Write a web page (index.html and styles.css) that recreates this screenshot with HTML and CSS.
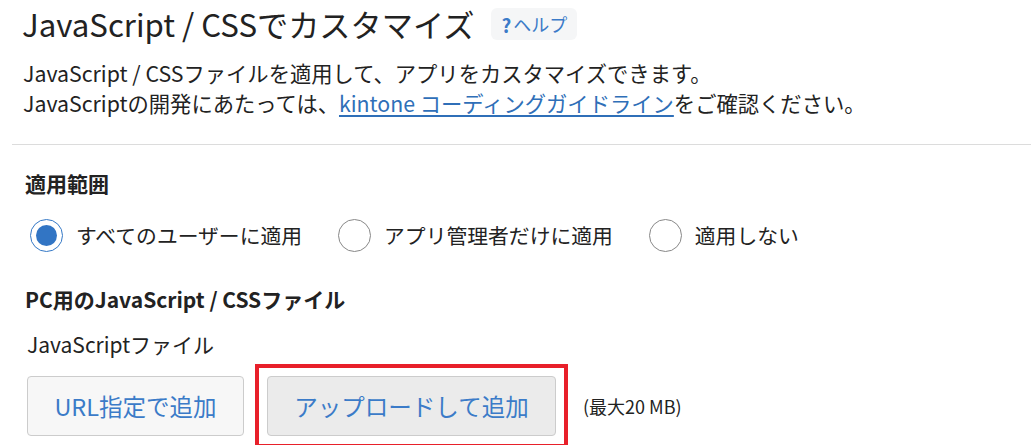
FILE: index.html
```html
<!DOCTYPE html>
<html lang="ja">
<head>
<meta charset="utf-8">
<link rel="stylesheet" href="styles.css">
</head>
<body>
<div class="page">
  <div class="inner">
    <div class="title-row">
      <h1 class="title">JavaScript / CSSでカスタマイズ</h1>
      <span class="help"><span class="help-q">?</span>ヘルプ</span>
    </div>
    <p class="desc">JavaScript / CSSファイルを適用して、アプリをカスタマイズできます。<br>JavaScriptの開発にあたっては、<a class="link" href="#">kintone コーディングガイドライン</a>をご確認ください。</p>
  </div>
  <hr class="rule">
  <div class="inner">
    <h2 class="section">適用範囲</h2>
    <div class="radios">
      <label class="radio"><span class="circle checked"></span>すべてのユーザーに適用</label>
      <label class="radio"><span class="circle"></span>アプリ管理者だけに適用</label>
      <label class="radio"><span class="circle"></span>適用しない</label>
    </div>
    <h2 class="section pc">PC用のJavaScript / CSSファイル</h2>
    <div class="file-label">JavaScriptファイル</div>
    <div class="buttons">
      <button class="btn url">URL指定で追加</button>
      <div class="highlight"><button class="btn upload">アップロードして追加</button></div>
      <span class="limit">(最大20 MB)</span>
    </div>
  </div>
</div>
</body>
</html>
```

FILE: styles.css
```css
* { box-sizing: border-box; }
body {
  margin: 0;
  background: #fff;
  font-family: "Noto Sans CJK JP", "Noto Sans", sans-serif;
  color: #222;
}
.page { padding-left: 12px; }
.inner { padding-left: 10px; }
.title-row {
  display: flex;
  align-items: center;
  gap: 17px;
  height: 48px;
}
.title {
  margin: 0;
  font-size: 31.2px;
  font-weight: 400;
  line-height: 48px;
  white-space: nowrap;
}
.help {
  display: inline-flex;
  align-items: center;
  height: 32px;
  padding: 0 10px;
  background: #f5f6f7;
  border-radius: 6px;
  color: #3b7bc8;
  font-size: 18px;
}
.help-q { font-weight: 700; font-size: 19px; margin-right: 2px; }
.desc {
  margin: 10px 0 0 1px;
  font-size: 21.3px;
  line-height: 30px;
  white-space: nowrap;
}
.link { color: #2f6fb8; text-decoration: underline; text-underline-offset: 3px; }
.rule {
  margin: 26px 0 0;
  border: 0;
  border-top: 1px solid #dcdcdc;
}
.section {
  margin: 24px 0 0 3px;
  font-size: 21px;
  font-weight: 700;
  line-height: 28px;
  white-space: nowrap;
}
.radios {
  display: flex;
  gap: 36px;
  margin-top: 21px;
  margin-left: 8px;
}
.radio {
  display: flex;
  align-items: center;
  gap: 13px;
  font-size: 20.8px;
  line-height: 34px;
  white-space: nowrap;
}
.circle {
  width: 33px;
  height: 33px;
  border-radius: 50%;
  border: 1px solid #888;
  background: #fff;
  position: relative;
  flex: none;
}
.circle.checked { border-color: #3478c6; }
.circle.checked::after {
  content: "";
  position: absolute;
  left: 5px; top: 5px;
  width: 21px; height: 21px;
  border-radius: 50%;
  background: #3275c4;
}
.pc { margin-top: 33px; }
.file-label {
  margin: 17px 0 0 5px;
  font-size: 21px;
  line-height: 28px;
  white-space: nowrap;
}
.buttons {
  display: flex;
  align-items: center;
  margin-top: 6px;
  margin-left: 5px;
}
.btn {
  flex: none;
  height: 60px;
  padding: 0;
  font-family: inherit;
  font-size: 23.5px;
  color: #3b7bc8;
  background: #f7f7f7;
  border: 1px solid #cccccc;
  border-radius: 4px;
  white-space: nowrap;
}
.url { width: 217px; }
.highlight {
  flex: none;
  margin-left: 11px;
  padding: 8px;
  border: 4px solid #e8202a;
}
.upload { background: #ebebeb; width: 289px; display: block; }
.limit {
  margin-left: 15px;
  font-size: 18px;
  color: #222;
  white-space: nowrap;
}
```
